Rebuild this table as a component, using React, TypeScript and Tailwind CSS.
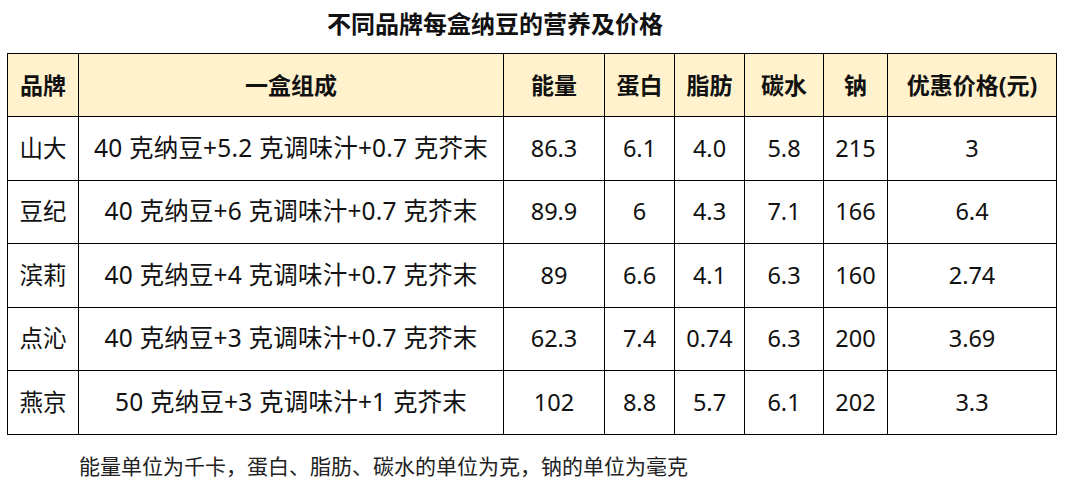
const FONT = "font-['Noto_Sans','Noto_Sans_CJK_SC',sans-serif]";

const COLS = ["品牌", "一盒组成", "能量", "蛋白", "脂肪", "碳水", "钠", "优惠价格(元)"];
const WIDTHS = ["w-[71px]", "w-[425px]", "w-[101px]", "w-[70px]", "w-[70px]", "w-[79px]", "w-[64px]", "w-[169px]"];

const ROWS = [
  ["山大", "40 克纳豆+5.2 克调味汁+0.7 克芥末", "86.3", "6.1", "4.0", "5.8", "215", "3"],
  ["豆纪", "40 克纳豆+6 克调味汁+0.7 克芥末", "89.9", "6", "4.3", "7.1", "166", "6.4"],
  ["滨莉", "40 克纳豆+4 克调味汁+0.7 克芥末", "89", "6.6", "4.1", "6.3", "160", "2.74"],
  ["点沁", "40 克纳豆+3 克调味汁+0.7 克芥末", "62.3", "7.4", "0.74", "6.3", "200", "3.69"],
  ["燕京", "50 克纳豆+3 克调味汁+1 克芥末", "102", "8.8", "5.7", "6.1", "202", "3.3"],
];

export default function App() {
  return (
    <div className={`w-[1069px] h-[491px] bg-white text-[#111] ${FONT}`}>
      <div className="pt-[8px] h-[53px] pl-[327px]">
        <h1 className="text-[24px] leading-[32px] font-bold">不同品牌每盒纳豆的营养及价格</h1>
      </div>
      <div className="pl-[7px]">
        <table className="table-fixed border-collapse w-[1050px]">
          <thead>
            <tr className="bg-[#fff2cc] h-[63px]">
              {COLS.map((c, i) => (
                <th
                  key={c}
                  className={`${WIDTHS[i]} border border-black text-center text-[23px] font-bold p-0 whitespace-nowrap`}
                >
                  {c}
                </th>
              ))}
            </tr>
          </thead>
          <tbody>
            {ROWS.map((r) => (
              <tr key={r[0]} className="h-[63.5px]">
                {r.map((v, i) => (
                  <td
                    key={i}
                    className={`border border-black text-center p-0 whitespace-nowrap ${i === 1 ? "text-[24.5px] tracking-[0.2px]" : "text-[23.5px]"}`}
                  >
                    {v}
                  </td>
                ))}
              </tr>
            ))}
          </tbody>
        </table>
      </div>
      <p className="pl-[79px] pt-[16px] text-[21px] leading-[30px] text-[#222]">能量单位为千卡，蛋白、脂肪、碳水的单位为克，钠的单位为毫克</p>
    </div>
  );
}
